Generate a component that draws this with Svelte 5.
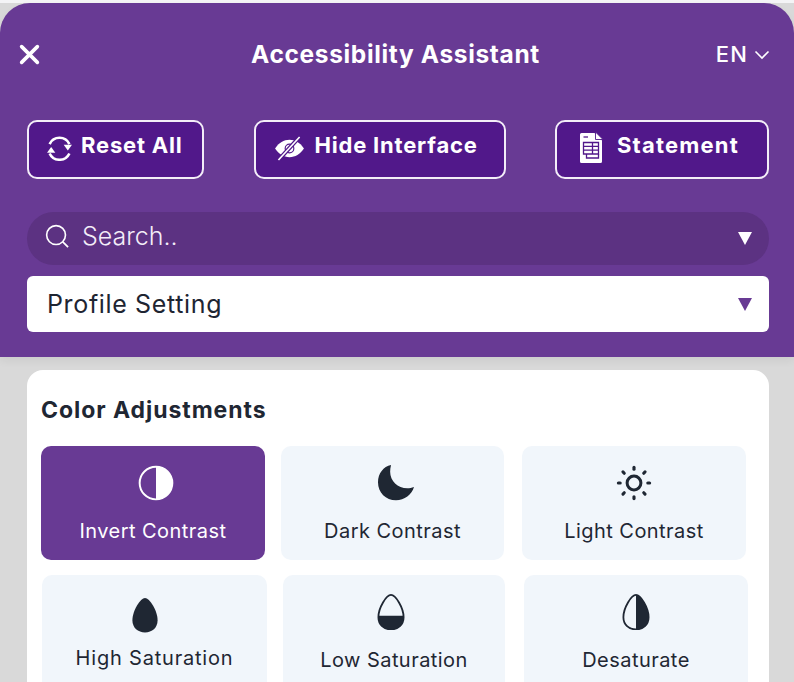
<script>
  const rowOne = [
    { label: "Invert Contrast", icon: "contrast", active: true },
    { label: "Dark Contrast", icon: "moon" },
    { label: "Light Contrast", icon: "sun" }
  ];
  const rowTwo = [
    { label: "High Saturation", icon: "high", raised: true },
    { label: "Low Saturation", icon: "low" },
    { label: "Desaturate", icon: "desat" }
  ];
  const drop = "M12 .6C9 .6 3.600 9 3.600 15.500 3.600 20.500 7.300 23.600 12 23.600S20.400 20.500 20.400 15.500C20.400 9 15 .6 12 .6Z";
  const rays = [0, 45, 90, 135, 180, 225, 270, 315];
</script>

{#snippet tile(item)}
  <div class="tile" class:active={item.active} class:raised={item.raised}>
    <svg class="tile-icon {item.icon}" viewBox="0 0 24 24" aria-hidden="true">
      {#if item.icon === "contrast"}
        <circle cx="12" cy="12" r="10.900" fill="none" stroke="currentColor" stroke-width="1.300" />
        <path d="M12 1.100a10.900 10.900 0 0 1 0 21.800Z" fill="currentColor" />
      {:else if item.icon === "moon"}
        <path d="M8.700 0C3.600 1 0 5.700 0 11.500 0 18.400 5.200 23.500 12 23.500c5.600 0 10.600-3.700 12-8.800-1.500.6-3 .8-4.400.8-6.500 0-11.500-5-11.500-11C8.100 3 8.300 1.500 8.700 0Z" fill="currentColor" />
      {:else if item.icon === "sun"}
        <circle cx="12" cy="12" r="4.600" fill="none" stroke="currentColor" stroke-width="2" />
        {#each rays as a}
          <line x1="12" y1="1.600" x2="12" y2="2.800" stroke="currentColor" stroke-width="2.100" stroke-linecap="round" transform="rotate({a} 12 12)" />
        {/each}
      {:else if item.icon === "high"}
        <path d={drop} fill="currentColor" />
      {:else if item.icon === "low"}
        <path d={drop} fill="none" stroke="currentColor" stroke-width="1.200" />
        <path d="M3.600 14.500H20.400V15.500C20.400 20.500 16.700 23.600 12 23.600S3.600 20.500 3.600 15.500Z" fill="currentColor" />
      {:else}
        <path d={drop} fill="none" stroke="currentColor" stroke-width="1.200" />
        <path d="M12 .6C15 .6 20.400 9 20.400 15.500 20.400 20.500 16.700 23.600 12 23.600Z" fill="currentColor" />
      {/if}
    </svg>
    <span>{item.label}</span>
  </div>
{/snippet}

<div class="page">
  <header class="panel">
    <div class="title-bar">
      <svg class="close" viewBox="0 0 20 20" aria-hidden="true">
        <path d="M2.500 2.500 17.500 17.500M17.500 2.500 2.500 17.500" stroke="#fff" stroke-width="3.400" stroke-linecap="round" fill="none" />
      </svg>
      <h1>Accessibility Assistant</h1>
      <div class="lang">
        EN
        <svg viewBox="0 0 16 10" aria-hidden="true">
          <path d="M1.500 1.500 8 8 14.500 1.500" stroke="#fff" stroke-width="1.600" fill="none" />
        </svg>
      </div>
    </div>

    <div class="actions">
      <button class="reset">
        <svg viewBox="0 0 24 24" aria-hidden="true">
          <path d="M2.500 7.750A10.500 10.500 0 0 1 21.500 7.750" fill="none" stroke="#fff" stroke-width="2.500" />
          <path d="M16 8.500H24L20 14Z" fill="#fff" />
          <path d="M21.500 16.750A10.500 10.500 0 0 1 2.500 16.750" fill="none" stroke="#fff" stroke-width="2.500" />
          <path d="M0 16H8L4 10.500Z" fill="#fff" />
        </svg>
        Reset All
      </button>
      <button class="hide">
        <svg viewBox="0 0 32 26" aria-hidden="true">
          <path d="M1 13C5 7 10 4 16 4s11 3 15 9c-4 6-9 9-15 9S5 19 1 13Z" fill="#fff" />
          <circle cx="16" cy="13" r="4.500" fill="none" stroke="#51188a" stroke-width="1.200" />
          <path d="M26 1.500 5 24.500" stroke="#51188a" stroke-width="4.200" />
          <path d="M26.500 1 4.500 25" stroke="#fff" stroke-width="1.700" />
        </svg>
        Hide Interface
      </button>
      <button class="statement">
        <svg viewBox="0 0 24 32" aria-hidden="true">
          <path d="M2.500 1H15.500L23 8.500V29.500A1.500 1.500 0 0 1 21.500 31H2.500A1.500 1.500 0 0 1 1 29.500V2.500A1.500 1.500 0 0 1 2.500 1Z" fill="#fff" />
          <path d="M16.500 0 24 7.500H16.500Z" fill="#fff" stroke="#51188a" stroke-width=".9" />
          <path d="M4.500 5H9" stroke="#51188a" stroke-width="1.300" />
          <path d="M4.500 10.500H19.500V22H4.500ZM4.500 14.300H19.500M4.500 18.200H19.500M13.500 10.500V22" stroke="#51188a" stroke-width="1.300" fill="none" />
          <path d="M7.500 22V26H19.500V22" stroke="#51188a" stroke-width="1.300" fill="none" />
        </svg>
        Statement
      </button>
    </div>

    <div class="search">
      <svg viewBox="0 0 26 26" aria-hidden="true">
        <circle cx="11.500" cy="11.500" r="9.800" fill="none" stroke="#fff" stroke-width="1.700" />
        <path d="M18.500 18.500 24 24" stroke="#fff" stroke-width="1.800" />
      </svg>
      <span>Search..</span>
      <i class="caret white"></i>
    </div>

    <div class="profile">
      <span>Profile Setting</span>
      <i class="caret purple"></i>
    </div>
  </header>

  <section class="card">
    <h2>Color Adjustments</h2>
    <div class="row first">
      {#each rowOne as item}
        {@render tile(item)}
      {/each}
    </div>
    <div class="row second">
      {#each rowTwo as item}
        {@render tile(item)}
      {/each}
    </div>
  </section>
</div>

<style>
  :global(body) {
    margin: 0;
    background: #d9d9d9;
  }

  .page {
    height: 682px;
    overflow: hidden;
    padding-top: 3px;
    box-sizing: border-box;
    background: linear-gradient(#f4f4f6 0 3px, #d9d9d9 3px);
    font-family: Inter, "Noto Sans", sans-serif;
  }

  .panel {
    height: 354px;
    box-sizing: border-box;
    background: #683a94;
    border-radius: 30px 30px 0 0;
    padding: 0 25px 0 27px;
    box-shadow: 0 4px 8px rgba(0, 0, 0, 0.06);
    color: #fff;
  }

  .title-bar {
    height: 99px;
    display: flex;
    align-items: center;
    justify-content: space-between;
    position: relative;
    padding-top: 4px;
    box-sizing: border-box;
  }

  .close {
    width: 21px;
    height: 21px;
    margin-left: -8px;
  }

  h1 {
    position: absolute;
    left: 224px;
    margin: -1px 0 0;
    font-size: 24.500px;
    font-weight: 700;
    letter-spacing: 0.65px;
  }

  .lang {
    display: flex;
    align-items: center;
    gap: 6px;
    margin-top: -1px;
    font-size: 22px;
    font-weight: 500;
    letter-spacing: 1.200px;
  }

  .lang svg {
    width: 16px;
    height: 10px;
    margin: 1px -1px 0 0;
  }

  .actions {
    display: flex;
    justify-content: space-between;
    padding-top: 18px;
  }

  button {
    height: 59px;
    box-sizing: border-box;
    border: 2px solid #f3edf8;
    border-radius: 10px;
    background: #51188a;
    color: #fff;
    font: 700 22px Inter, "Noto Sans", sans-serif;
    letter-spacing: 0.8px;
    display: flex;
    align-items: center;
    padding: 0 0 10px 18px;
  }

  .reset {
    width: 177px;
    gap: 9px;
  }

  .reset svg {
    width: 25px;
    height: 25px;
    margin-top: 7px;
  }

  .hide {
    width: 252px;
    gap: 10px;
  }

  .hide svg {
    width: 31px;
    height: 25px;
    margin-top: 7px;
  }

  .statement {
    width: 214px;
    gap: 14px;
    padding-left: 22px;
    letter-spacing: 1.200px;
  }

  .statement svg {
    width: 24px;
    height: 32px;
    margin-top: 7px;
  }

  .search {
    margin-top: 33px;
    height: 53px;
    border-radius: 27px;
    background: #5c3282;
    display: flex;
    align-items: center;
    padding: 0 17px 0 18px;
    font-size: 25px;
    font-weight: 300;
    color: #f3edf8;
  }

  .search svg {
    width: 25px;
    height: 25px;
    margin: -5px 12px 0 0;
  }

  .search span {
    flex: 1;
    margin-top: -6px;
  }

  .profile {
    margin-top: 11px;
    height: 56px;
    border-radius: 6px;
    background: #fff;
    color: #1e2532;
    display: flex;
    align-items: center;
    padding: 0 17px 0 20px;
    font-size: 25px;
    font-weight: 400;
    letter-spacing: 0.65px;
  }

  .profile span {
    flex: 1;
  }

  .caret {
    width: 0;
    height: 0;
    border-left: 7.500px solid transparent;
    border-right: 7.500px solid transparent;
    border-top: 13px solid #fff;
  }

  .caret.purple {
    border-top-color: #683a94;
  }

  .card {
    margin: 13px 25px 0 27px;
    padding: 26px 0 0 14px;
    height: 340px;
    box-sizing: border-box;
    background: #fff;
    border-radius: 16px;
    color: #1f2733;
  }

  h2 {
    margin: 0;
    font-size: 23px;
    line-height: 28px;
    font-weight: 700;
    letter-spacing: 0.95px;
  }

  .row {
    display: grid;
  }

  .first {
    margin-top: 22px;
    grid-template-columns: 224px 223px 224px;
    column-gap: 16px;
  }

  .first .tile:last-child {
    margin: 0 -2px 0 2px;
  }

  .second {
    margin-top: 15px;
    margin-left: 1px;
    grid-template-columns: 225px 222px 224px;
    column-gap: 16px;
  }

  .second .tile:last-child {
    margin: 0 -3px 0 3px;
  }

  .tile {
    height: 114px;
    border-radius: 10px;
    background: #f1f6fb;
    display: flex;
    flex-direction: column;
    align-items: center;
    box-sizing: border-box;
    padding-top: 19px;
    font-size: 20px;
    font-weight: 400;
    letter-spacing: 0.45px;
  }

  .tile span {
    margin-top: 17px;
    line-height: 26px;
    white-space: nowrap;
  }

  .tile-icon {
    width: 36px;
    height: 36px;
    flex: none;
  }

  .tile-icon.contrast,
  .tile-icon.moon {
    margin-left: 6px;
  }

  .tile-icon.high {
    margin: 3px 19px 0 0;
  }

  .tile-icon.low {
    margin-right: 6px;
  }

  .second .tile {
    height: 130px;
  }

  .tile.raised span {
    margin-top: 12px;
    letter-spacing: 0.8px;
  }

  .tile.active {
    background: #683a94;
    color: #fff;
  }
</style>
